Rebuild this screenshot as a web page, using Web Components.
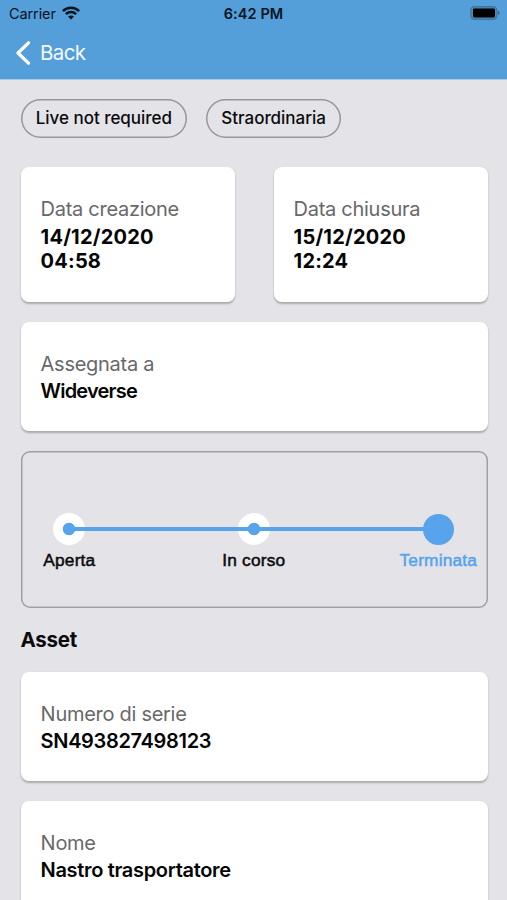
<!DOCTYPE html>
<html lang="it">
<head>
<meta charset="UTF-8">
<meta name="viewport" content="width=device-width, initial-scale=1">
<title>Asset</title>
<style>
    html {
        height: 100%;
        overflow: hidden;
    }

    body {
        margin: 0;
        height: 100%;
        overflow: hidden;
        background: #e4e3e8;
        font-family: Inter, "Liberation Sans", sans-serif;
        color: #0b0b0d;
    }
</style>
</head>
<body>
<ticket-page></ticket-page>

<script>
class StatusBar extends HTMLElement {
    constructor() {
        super();
        this.attachShadow({ mode: 'open' });
    }

    connectedCallback() {
        this.shadowRoot.innerHTML = `
        <div class="carrier">
            <span>${this.getAttribute('carrier')}</span>
            <svg width="18" height="14" viewBox="0 0 18 14">
                <g fill="none" stroke="#07131d" stroke-width="2.5">
                    <path d="M.9 5.1C5.4.7 12.6.7 17.1 5.1"/>
                    <path d="M3.9 8.2c2.9-2.8 7.3-2.8 10.2 0"/>
                </g>
                <path d="M6 10.6c1.7-1.6 4.3-1.6 6 0l-3 3z" fill="#07131d"/>
            </svg>
        </div>
        <span class="time">${this.getAttribute('time')}</span>
        <svg class="battery" width="30" height="14" viewBox="0 0 30 14">
            <rect x=".8" y=".6" width="26" height="12.8" rx="3.6" fill="#4b87b8" stroke="#3f749f" stroke-width="1.2"/>
            <rect x="3" y="2.6" width="22" height="8.8" rx="1.4" fill="#000"/>
            <path d="M28 4.8c2.2.8 2.2 3.4 0 4.2z" fill="#33658d"/>
        </svg>
        <style>
            :host {
                display: grid;
                grid-template-columns: 1fr auto 1fr;
                align-items: center;
                height: 27px;
                padding: 0 7px 0 9px;
                color: #07131d;
                font-size: 14.5px;
                line-height: 27px;
            }

            .carrier {
                display: flex;
                align-items: center;
                gap: 6px;
                letter-spacing: -0.1px;
            }

            .carrier svg {
                margin-top: -2px;
            }

            .time {
                margin-right: 2px;
                font-weight: 600;
                font-size: 14.5px;
                letter-spacing: 0.1px;
            }

            .battery {
                justify-self: end;
                margin-top: -1px;
            }
        </style>
        `;
    }
}

class NavBar extends HTMLElement {
    constructor() {
        super();
        this.attachShadow({ mode: 'open' });
    }

    connectedCallback() {
        this.shadowRoot.innerHTML = `
        <svg width="16" height="24" viewBox="0 0 16 24">
            <path d="M13.5 1.8 3 12l10.5 10.2" fill="none" stroke="#fff" stroke-width="3.2" stroke-linecap="round" stroke-linejoin="round"/>
        </svg>
        <slot></slot>
        <style>
            :host {
                display: flex;
                align-items: center;
                gap: 9px;
                height: 52px;
                padding-left: 15px;
                box-sizing: border-box;
                color: #f4f9fd;
                font-size: 20.5px;
                line-height: 52px;
                letter-spacing: -0.6px;
            }
        </style>
        `;
    }
}

class TagPill extends HTMLElement {
    constructor() {
        super();
        this.attachShadow({ mode: 'open' });
    }

    connectedCallback() {
        this.shadowRoot.innerHTML = `
        <slot></slot>
        <style>
            :host {
                display: flex;
                align-items: center;
                justify-content: center;
                box-sizing: border-box;
                height: 39px;
                box-shadow: inset 0 0 0 1.5px #97979b;
                border-radius: 20px;
                font-size: 17px;
                font-weight: 500;
                letter-spacing: -0.02px;
                white-space: nowrap;
            }
        </style>
        `;
    }
}

class InfoCard extends HTMLElement {
    constructor() {
        super();
        this.attachShadow({ mode: 'open' });
    }

    connectedCallback() {
        this.shadowRoot.innerHTML = `
        <div class="label">${this.getAttribute('label')}</div>
        <div class="value"><slot></slot></div>
        <style>
            :host {
                display: block;
                box-sizing: border-box;
                padding: 29px 20px 0;
                background: #fff;
                border-radius: 8px;
                box-shadow: 0 1.5px 2px rgba(0, 0, 0, 0.25);
            }

            .label {
                color: #68686b;
                font-size: 20px;
                line-height: 26px;
                letter-spacing: -0.28px;
            }

            .value {
                margin-top: var(--value-gap, 2px);
                color: #050505;
                font-size: 20px;
                font-weight: var(--value-weight, 600);
                line-height: 24.5px;
                letter-spacing: var(--value-track, -0.33px);
            }
        </style>
        `;
    }
}

class StepTracker extends HTMLElement {
    constructor() {
        super();
        this.attachShadow({ mode: 'open' });
    }

    connectedCallback() {
        this.shadowRoot.innerHTML = `
        <div class="steps"><slot></slot></div>
        <style>
            :host {
                display: block;
                box-sizing: border-box;
                height: 157px;
                padding: 62.5px 0 0 1px;
                box-shadow: inset 0 0 0 1.5px #a0a0a4;
                border-radius: 9px;
            }

            .steps {
                display: grid;
                grid-template-columns: repeat(3, 184.5px);
                margin-left: -44.5px;
            }
        </style>
        `;
    }
}

class StepItem extends HTMLElement {
    constructor() {
        super();
        this.attachShadow({ mode: 'open' });
    }

    connectedCallback() {
        this.shadowRoot.innerHTML = `
        <div class="dot"></div>
        <div class="label"><slot></slot></div>
        <style>
            :host {
                display: flex;
                flex-direction: column;
                align-items: center;
                position: relative;
            }

            .dot {
                width: 32px;
                height: 32px;
                border-radius: 50%;
                background: radial-gradient(circle, #57a3ec 5.8px, #fff 6.6px);
            }

            /* connector drawn over the discs, up to the next step */
            :host(:not([current]))::after {
                content: "";
                position: absolute;
                z-index: 1;
                top: 14px;
                left: 50%;
                width: 100%;
                height: 4px;
                background: #57a3ec;
            }

            :host([current]) .dot {
                width: 31px;
                height: 31px;
                margin: 0.5px;
                background: #57a3ec;
            }

            .label {
                margin-top: 5px;
                font-family: "Liberation Sans", Arial, sans-serif;
                font-size: 17.3px;
                line-height: 20px;
                letter-spacing: 0.2px;
                -webkit-text-stroke: 0.5px currentColor;
                white-space: nowrap;
            }

            :host([current]) .label {
                color: #57a3ec;
            }
        </style>
        `;
    }
}

class TicketPage extends HTMLElement {
    constructor() {
        super();
        this.attachShadow({ mode: 'open' });
    }

    connectedCallback() {
        this.shadowRoot.innerHTML = `
        <header>
            <status-bar carrier="Carrier" time="6:42 PM"></status-bar>
            <nav-bar>Back</nav-bar>
        </header>
        <main>
            <div class="tags">
                <tag-pill class="live">Live not required</tag-pill>
                <tag-pill class="kind">Straordinaria</tag-pill>
            </div>
            <div class="dates">
                <info-card class="date" label="Data creazione">14/12/2020<br>04:58</info-card>
                <info-card class="date" label="Data chiusura">15/12/2020<br>12:24</info-card>
            </div>
            <info-card class="row assignee" label="Assegnata a">Wideverse</info-card>
            <step-tracker>
                <step-item>Aperta</step-item>
                <step-item>In corso</step-item>
                <step-item current>Terminata</step-item>
            </step-tracker>
            <h2>Asset</h2>
            <info-card class="row" label="Numero di serie">SN493827498123</info-card>
            <info-card class="row next" label="Nome">Nastro trasportatore</info-card>
        </main>
        <style>
            :host {
                display: block;
            }

            header {
                height: 80px;
                background: #549eda;
                border-bottom: 1px solid #a9c8e4;
                box-sizing: border-box;
            }

            main {
                padding: 18.5px 19.4px 0 20.6px;
            }

            .tags {
                display: flex;
                gap: 19px;
            }

            .live {
                width: 166.5px;
            }

            .kind {
                width: 135px;
            }

            .dates {
                display: grid;
                grid-template-columns: 1fr 1fr;
                gap: 39px;
                margin: 29px 0 19.5px;
            }

            .date {
                height: 135.5px;
                --value-gap: 3px;
                --value-weight: 650;
                --value-track: 0.2px;
            }

            .row {
                height: 109.5px;
            }

            .assignee {
                --value-track: -0.8px;
            }

            step-tracker {
                margin-top: 19.5px;
            }

            h2 {
                margin: 19.5px 0 18.5px;
                font-size: 20.5px;
                font-weight: 700;
                line-height: 26px;
                letter-spacing: -0.3px;
            }

            .next {
                margin-top: 19.5px;
            }
        </style>
        `;
    }
}

window.customElements.define('status-bar', StatusBar);
window.customElements.define('nav-bar', NavBar);
window.customElements.define('tag-pill', TagPill);
window.customElements.define('info-card', InfoCard);
window.customElements.define('step-tracker', StepTracker);
window.customElements.define('step-item', StepItem);
window.customElements.define('ticket-page', TicketPage);
</script>
</body>
</html>
